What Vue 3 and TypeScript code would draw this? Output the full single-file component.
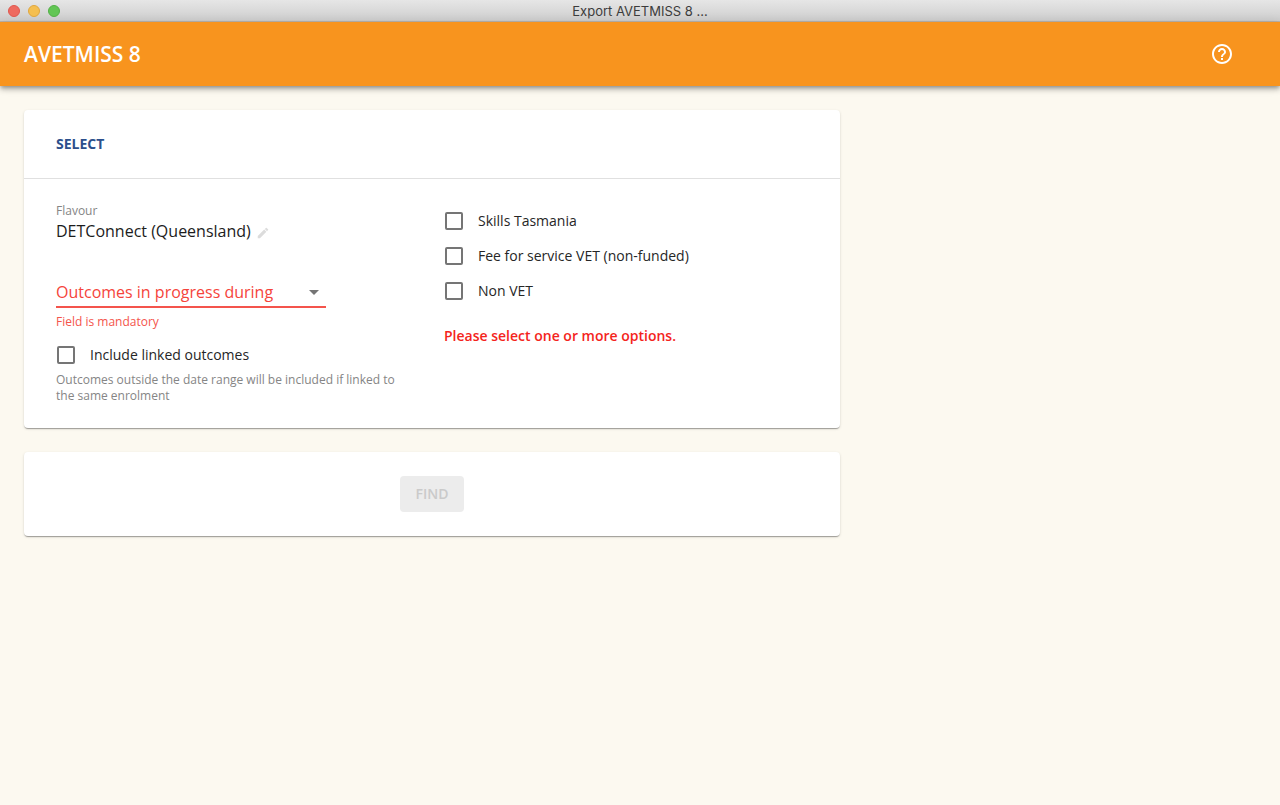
<script setup lang="ts">
import { computed, ref } from 'vue'

interface FundingOption {
  id: string
  label: string
  checked: boolean
}

const flavour = ref('DETConnect (Queensland)')
const period = ref('')
const includeLinked = ref(false)
const options = ref<FundingOption[]>([
  { id: 'skills-tasmania', label: 'Skills Tasmania', checked: false },
  { id: 'fee-for-service', label: 'Fee for service VET (non-funded)', checked: false },
  { id: 'non-vet', label: 'Non VET', checked: false },
])

const noneSelected = computed(() => !options.value.some((o) => o.checked))
const canFind = computed(() => period.value !== '' && !noneSelected.value)
</script>

<template>
  <div class="window">
    <header class="titlebar">
      <div class="lights">
        <span class="light close"></span>
        <span class="light minimise"></span>
        <span class="light zoom"></span>
      </div>
      <span class="window-title">Export AVETMISS 8 ...</span>
    </header>

    <div class="appbar">
      <h1>AVETMISS 8</h1>
      <button class="help" type="button" aria-label="Help">
        <svg viewBox="0 0 24 24" width="24" height="24" fill="currentColor">
          <path
            d="M11 18h2v-2h-2v2zm1-16C6.48 2 2 6.48 2 12s4.48 10 10 10 10-4.48 10-10S17.52 2 12 2zm0 18c-4.41 0-8-3.59-8-8s3.59-8 8-8 8 3.59 8 8-3.59 8-8 8zm0-14c-2.21 0-4 1.79-4 4h2c0-1.1.9-2 2-2s2 .9 2 2c0 2-3 1.75-3 5h2c0-2.25 3-2.5 3-5 0-2.21-1.79-4-4-4z"
          />
        </svg>
      </button>
    </div>

    <main class="content">
      <div class="cards">
        <section class="card">
          <h2>Select</h2>
          <div class="form">
            <div class="left">
              <span class="caption">Flavour</span>
              <button class="flavour" type="button">
                {{ flavour }}
                <svg viewBox="0 0 24 24" width="14" height="14" fill="currentColor">
                  <path
                    d="M3 17.25V21h3.750L17.810 9.940l-3.750-3.750L3 17.250zM20.710 7.040c.39-.39.39-1.020 0-1.410l-2.340-2.340a.996.996 0 0 0-1.410 0l-1.830 1.830 3.750 3.750 1.830-1.830z"
                  />
                </svg>
              </button>

              <div class="select">
                <select v-model="period" aria-label="Outcomes in progress during">
                  <option value="" disabled>Outcomes in progress during</option>
                  <option value="month">This month</option>
                  <option value="year">This year</option>
                </select>
                <svg viewBox="0 0 24 24" width="24" height="24" fill="currentColor">
                  <path d="M7 10l5 5 5-5z" />
                </svg>
              </div>
              <span class="error">Field is mandatory</span>

              <label class="check linked">
                <input v-model="includeLinked" type="checkbox" />
                Include linked outcomes
              </label>
              <p class="caption">
                Outcomes outside the date range will be included if linked to the same enrolment
              </p>
            </div>

            <div class="right">
              <label v-for="option in options" :key="option.id" class="check">
                <input v-model="option.checked" type="checkbox" />
                {{ option.label }}
              </label>
              <p v-if="noneSelected" class="warning">Please select one or more options.</p>
            </div>
          </div>
        </section>

        <section class="card actions">
          <button class="find" type="button" :disabled="!canFind">FIND</button>
        </section>
      </div>
    </main>
  </div>
</template>

<style>
body {
  background: #fcf9f0;
}
</style>

<style scoped>
.window {
  min-height: 100vh;
  font-family: 'Open Sans', 'Noto Sans', sans-serif;
  font-size: 14px;
  font-weight: 400;
  line-height: 20px;
  color: #262626;
}

.window *,
.window {
  box-sizing: border-box;
}

h1,
h2,
p {
  margin: 0;
}

button {
  font: inherit;
  border: 0;
  padding: 0;
  background: none;
  cursor: pointer;
}

.titlebar {
  display: grid;
  grid-template-columns: 1fr auto 1fr;
  align-items: center;
  height: 22px;
  padding: 0 8px;
  background: linear-gradient(#e6e6e6, #cecece);
  border-bottom: 1px solid #bdb4aa;
}

.lights {
  display: flex;
  gap: 8px;
}

.light {
  width: 12px;
  height: 12px;
  border-radius: 50%;
  border: 1px solid #e0574d;
  background: #ee6a5f;
}

.minimise {
  border-color: #e0a73e;
  background: #f5bf50;
}

.zoom {
  border-color: #52b046;
  background: #62c654;
}

.window-title {
  font-family: Inter, Roboto, sans-serif;
  font-size: 13px;
  font-weight: 400;
  color: #3c3c3c;
}

.appbar {
  display: flex;
  align-items: center;
  justify-content: space-between;
  height: 64px;
  padding: 0 46px 0 24px;
  background: #f8941e;
  color: #fff;
  box-shadow:
    0 2px 4px -1px rgba(0, 0, 0, 0.3),
    0 4px 5px rgba(0, 0, 0, 0.16),
    0 1px 10px rgba(0, 0, 0, 0.12);
}

h1 {
  font-size: 21px;
  font-weight: 600;
  line-height: 32px;
}

.help {
  display: flex;
  color: inherit;
}

.content {
  display: grid;
  grid-template-columns: 2fr 1fr;
  gap: 8px;
  padding: 24px;
}

.cards {
  display: flex;
  flex-direction: column;
  gap: 24px;
}

.card {
  background: #fff;
  border-radius: 4px;
  box-shadow:
    0 2px 1px -1px rgba(0, 0, 0, 0.2),
    0 1px 1px rgba(0, 0, 0, 0.14),
    0 1px 3px rgba(0, 0, 0, 0.12);
}

h2 {
  padding: 24px 32px;
  border-bottom: 1px solid #e0e0e0;
  font-size: 14px;
  font-weight: 700;
  line-height: 20px;
  text-transform: uppercase;
  color: #2c4f8c;
}

.form {
  display: grid;
  grid-template-columns: 1fr 1fr;
  gap: 24px;
  padding: 24px 32px;
}

.left,
.right {
  display: flex;
  flex-direction: column;
  align-items: flex-start;
}

.left {
  padding-right: 12px;
}

.caption {
  font-size: 12px;
  line-height: 16px;
  color: #858585;
}

.flavour {
  display: flex;
  align-items: center;
  gap: 5px;
  font-size: 16px;
  line-height: 24px;
  color: #1c1c1c;
}

.flavour svg {
  margin-top: 4px;
  color: #dcdcdc;
}

.select {
  display: flex;
  align-items: center;
  width: 270px;
  height: 32px;
  margin-top: 33px;
  padding-top: 2px;
  border-bottom: 2px solid #f4544c;
}

.select select {
  flex: 1;
  height: 28px;
  margin-right: -24px;
  padding: 0 24px 0 0;
  border: 0;
  appearance: none;
  background: none;
  font: inherit;
  font-size: 16px;
  color: #f5443b;
}

.select svg {
  color: #757575;
  pointer-events: none;
}

.error {
  margin-top: 6px;
  font-size: 12px;
  line-height: 16px;
  color: #f4544c;
}

.check {
  display: flex;
  align-items: center;
  gap: 15px;
  height: 35px;
}

.linked {
  margin-top: 7px;
}

.check input {
  width: 18px;
  height: 18px;
  margin: 0 0 0 1px;
  appearance: none;
  border: 2px solid #757575;
  border-radius: 2px;
}

.check input:checked {
  background: #f8941e;
  border-color: #f8941e;
}

.warning {
  margin-top: 18px;
  font-weight: 600;
  color: #f4241c;
}

.actions {
  display: flex;
  justify-content: center;
  padding: 24px;
}

.find {
  height: 36px;
  padding: 0 16px;
  border-radius: 4px;
  font-weight: 600;
  background: #f8941e;
  color: #fff;
}

.find:disabled {
  background: #ececec;
  color: #cacaca;
  cursor: default;
}
</style>
